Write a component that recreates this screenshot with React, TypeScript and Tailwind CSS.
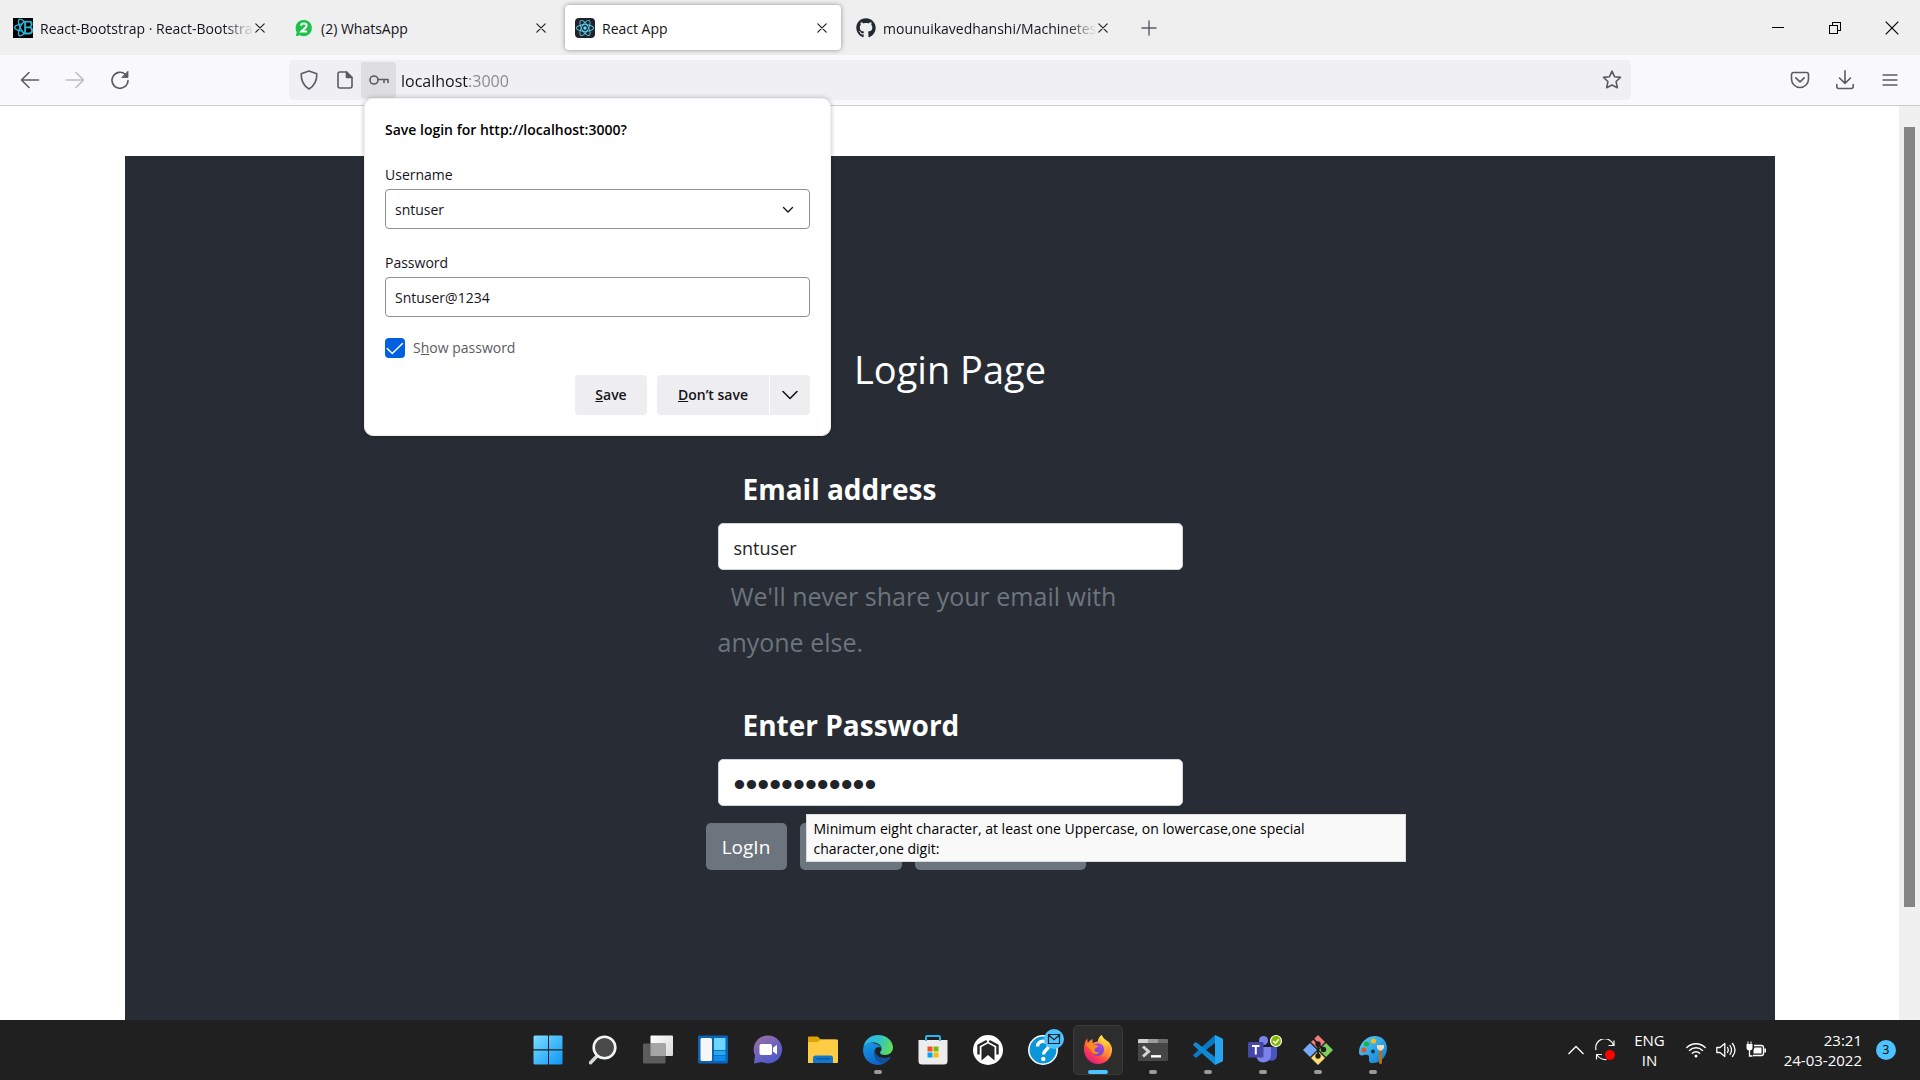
import type { ReactNode } from "react";
import { SiReact, SiReactbootstrap } from "react-icons/si";
import { FaGithub } from "react-icons/fa";

const ui = "font-['Open_Sans',sans-serif]";

/* ---------- Tab strip ---------- */

function CloseGlyph() {
  return (
    <svg width="10" height="10" viewBox="0 0 10 10" stroke="currentColor" strokeWidth="1.2" strokeLinecap="round">
      <path d="M.8.8l8.4 8.4M9.2.8L.8 9.2" />
    </svg>
  );
}

function WhatsAppIcon() {
  return (
    <svg width="20" height="20" viewBox="0 0 20 20">
      <path d="M1 19l1.3-4.6A8.6 8.6 0 1 1 5.800 17.700Z" fill="#1fc04c" stroke="#fff" strokeWidth=".8" />
      <path d="M7 7.600C7.200 4.800 12.600 4.800 12.600 7.800C12.600 10 9 11.300 7.200 13.600H13" fill="none" stroke="#fff" strokeWidth="2" />
    </svg>
  );
}

type TabProps = { icon: ReactNode; title: string; active?: boolean; fade?: boolean };

function Tab({ icon, title, active, fade }: TabProps) {
  return (
    <div
      className={
        active
          ? "flex h-[45px] w-[276px] items-center rounded bg-white pl-[10px] pr-[8px] shadow-[0_0_5px_rgba(0,0,0,0.4)]"
          : "flex h-[45px] w-[276px] items-center pl-[10px] pr-[8px]"
      }
    >
      <button type="button" aria-pressed={!!active} className="flex h-full min-w-0 flex-1 items-center gap-[7px] text-left">
        <span className="flex size-5 shrink-0 items-center justify-center">{icon}</span>
        <span
          className={
            fade
              ? "min-w-0 flex-1 overflow-hidden pt-0.5 text-[14px] leading-5 whitespace-nowrap [mask-image:linear-gradient(to_right,#000_86%,transparent)]"
              : "min-w-0 flex-1 overflow-hidden pt-0.5 text-[14px] leading-5 whitespace-nowrap"
          }
        >
          {title}
        </span>
      </button>
      <button type="button" aria-label={`Close ${title}`} className="flex h-6 w-[17px] shrink-0 items-center justify-end pr-[6px] text-[#222]">
        <CloseGlyph />
      </button>
    </div>
  );
}

function TabStrip() {
  return (
    <div className="flex h-[55px] items-center bg-[#efefef] pl-[3px] text-[#15141a]">
      <div className="flex gap-[5px]">
        <Tab
          fade
          title="React-Bootstrap · React-Bootstra"
          icon={
            <span className="flex size-5 items-center justify-center bg-black text-[#2fb5d6]">
              <SiReactbootstrap size={19} />
            </span>
          }
        />
        <Tab title="(2) WhatsApp" icon={<WhatsAppIcon />} />
        <Tab
          active
          title="React App"
          icon={
            <span className="flex size-5 items-center justify-center rounded-sm bg-[#20232a] text-[#61dafb]">
              <SiReact size={18} />
            </span>
          }
        />
        <Tab fade title="mounuikavedhanshi/Machinetes" icon={<FaGithub size={20} color="#24292f" />} />
      </div>
      <button type="button" aria-label="New tab" className="ml-[11px] flex size-8 items-center justify-center text-[#5b5b66]">
        <svg width="16" height="16" viewBox="0 0 16 16" stroke="currentColor" strokeWidth="1.4" strokeLinecap="round">
          <path d="M8 1v14M1 8h14" />
        </svg>
      </button>
      <div className="ml-auto flex h-full text-black">
        <button type="button" aria-label="Minimize" className="flex w-[57px] items-center justify-center">
          <svg width="12" height="12" viewBox="0 0 12 12" stroke="currentColor" shapeRendering="crispEdges">
            <path d="M0 5.500h12" />
          </svg>
        </button>
        <button type="button" aria-label="Restore" className="flex w-[57px] items-center justify-center">
          <svg width="12" height="12" viewBox="0 0 12 12" fill="none" stroke="currentColor" shapeRendering="crispEdges">
            <path d="M.5 3.500h8v8h-8ZM3.500 3.500v-3h8v8h-3" />
          </svg>
        </button>
        <button type="button" aria-label="Close" className="flex w-[57px] items-center justify-center">
          <svg width="14" height="14" viewBox="0 0 14 14" stroke="currentColor" strokeWidth="1.200">
            <path d="M.7.7l12.600 12.600M13.300.7L.7 13.300" />
          </svg>
        </button>
      </div>
    </div>
  );
}

/* ---------- Toolbar ---------- */

function Stroke({ children, size = 20 }: { children: ReactNode; size?: number }) {
  return (
    <svg width={size} height={size} viewBox="0 0 20 20" fill="none" stroke="currentColor" strokeWidth="1.600" strokeLinecap="round" strokeLinejoin="round">
      {children}
    </svg>
  );
}

function SaveLogin() {
  return (
    <section
      aria-label="Save login"
      className="absolute top-[38px] left-[75px] z-20 w-[467px] rounded-[9px] border border-[#f0f0f4] bg-white px-5 pt-[21px] pb-5 text-[14px] leading-5 text-[#15141a] shadow-[0_0_5px_rgba(0,0,0,0.25)]"
    >
      <h2 className="font-semibold text-black">Save login for http://localhost:3000?</h2>
      <label htmlFor="saved-user" className="mt-[25px] block">
        Username
      </label>
      <div className="relative mt-1">
        <select id="saved-user" className="block h-10 w-full appearance-none rounded border border-[#8f8f9d] bg-white px-[9px] pt-px">
          <option>sntuser</option>
        </select>
        <svg className="pointer-events-none absolute top-[17px] right-[16px]" width="12" height="8" viewBox="0 0 12 8" fill="none" stroke="#15141a" strokeWidth="1.400" strokeLinecap="round" strokeLinejoin="round">
          <path d="M1.500 1.500L6 6l4.500-4.500" />
        </svg>
      </div>
      <label htmlFor="saved-pass" className="mt-6 block">
        Password
      </label>
      <input id="saved-pass" type="text" defaultValue="Sntuser@1234" className="mt-1 block h-10 w-full rounded border border-[#8f8f9d] bg-white px-[9px] pt-px" />
      <div className="mt-[21px] flex items-center gap-2">
        <span className="relative size-5">
          <input id="show-pass" type="checkbox" defaultChecked className="block size-5 appearance-none rounded-sm bg-[#0060df]" />
          <svg className="pointer-events-none absolute inset-0" width="20" height="20" viewBox="0 0 20 20" fill="none" stroke="#fff" strokeWidth="1.500" strokeLinecap="round" strokeLinejoin="round">
            <path d="M2.200 10.500L7.300 15.500L17.500 5.500" />
          </svg>
        </span>
        <label htmlFor="show-pass" className="text-[#5b5b61]">
          S<u>h</u>ow password
        </label>
      </div>
      <div className="mt-[17px] flex justify-end font-semibold">
        <button type="button" className="h-10 w-[72px] rounded bg-[#eeeef0]">
          <u>S</u>ave
        </button>
        <button type="button" className="ml-[10px] h-10 w-[112px] rounded-l bg-[#eeeef0]">
          <u>D</u>on’t save
        </button>
        <button type="button" aria-label="More options" className="ml-px flex h-10 w-10 items-center justify-center rounded-r bg-[#eeeef0]">
          <svg width="16" height="10" viewBox="0 0 16 10" fill="none" stroke="#15141a" strokeWidth="1.600" strokeLinecap="round" strokeLinejoin="round">
            <path d="M1 1.500l7 7l7-7" />
          </svg>
        </button>
      </div>
    </section>
  );
}

function Toolbar() {
  return (
    <div className="flex h-[51px] items-center border-b border-[#cccccf] bg-[#f9f9fb] text-[#5b5b66]">
      <div className="flex w-[289px] gap-[5px] pl-[10px]">
        <button type="button" aria-label="Back" className="flex size-10 items-center justify-center">
          <Stroke>
            <path d="M18.500 10H1.500M9 2.500L1.500 10L9 17.500" />
          </Stroke>
        </button>
        <button type="button" aria-label="Forward" disabled className="flex size-10 items-center justify-center text-[#bdbdc2]">
          <Stroke>
            <path d="M1.500 10h17M11 2.500l7.500 7.500L11 17.500" />
          </Stroke>
        </button>
        <button type="button" aria-label="Reload" className="flex size-10 items-center justify-center">
          <Stroke>
            <path d="M18 10.500A8 8 0 1 1 15.500 4.500" />
            <path d="M18 1.500v6h-6Z" fill="currentColor" strokeWidth=".8" />
          </Stroke>
        </button>
      </div>
      <div className="relative flex h-10 flex-1 items-center rounded-[5px] bg-[#f0f0f4]">
        <button type="button" aria-label="Tracking protection" className="flex h-9 w-10 items-center justify-center">
          <Stroke>
            <path d="M10 1L2.200 3.800C2 10.500 4 15.500 10 19C16 15.500 18 10.500 17.800 3.800Z" />
          </Stroke>
        </button>
        <button type="button" aria-label="Site information" className="flex h-9 w-8 items-center justify-center">
          <Stroke>
            <path d="M11.500 2H5a2 2 0 0 0-2 2v12a2 2 0 0 0 2 2h10a2 2 0 0 0 2-2V7.500Z" />
            <path d="M11.500 2v5.500H17Z" fill="currentColor" />
          </Stroke>
        </button>
        <button type="button" aria-label="Saved logins" className="flex h-9 w-[35px] items-center justify-center rounded-[3px] bg-[#dedee0]">
          <Stroke>
            <circle cx="5" cy="10" r="4" />
            <path d="M9 9.500h10v3M15 9.500v3" />
          </Stroke>
        </button>
        <input
          type="text"
          aria-label="Address"
          defaultValue="localhost:3000"
          className="mr-4 ml-[5px] min-w-0 flex-1 bg-[linear-gradient(to_right,#15141a_68px,#85858d_68px)] bg-clip-text pt-0.5 text-[16px] leading-6 text-transparent outline-none"
        />
        <button type="button" aria-label="Bookmark this page" className="mr-[9px] flex size-5 items-center justify-center">
          <Stroke>
            <path d="M10 1.200l2.500 5.500l6 .7l-4.400 4.100l1.200 6.200L10 15l-5.300 2.700l1.200-6.200L1.500 7.400l6-.7Z" />
          </Stroke>
        </button>
        <SaveLogin />
      </div>
      <div className="flex w-[289px] justify-end gap-[5px] pr-[10px]">
        <button type="button" aria-label="Save to Pocket" className="flex size-10 items-center justify-center">
          <Stroke>
            <path d="M3.500 2.500h13a2 2 0 0 1 2 2V9A8.500 8.500 0 0 1 1.500 9V4.500a2 2 0 0 1 2-2ZM5.800 7.800L10 11.800l4.200-4" />
          </Stroke>
        </button>
        <button type="button" aria-label="Downloads" className="flex size-10 items-center justify-center">
          <Stroke>
            <path d="M10 .8v12.500M4.500 8L10 13.300L15.500 8M1.800 14.500v2a2 2 0 0 0 2 2h12.400a2 2 0 0 0 2-2v-2" />
          </Stroke>
        </button>
        <button type="button" aria-label="Menu" className="flex size-10 items-center justify-center">
          <Stroke>
            <path d="M3 5h14M3 10h14M3 15h14" strokeWidth="1.300" />
          </Stroke>
        </button>
      </div>
    </div>
  );
}

/* ---------- Web page ---------- */

function LoginPage() {
  return (
    <div className="flex flex-1 bg-white">
      <main className="mt-[50px] mr-[124px] ml-[125px] flex flex-1 flex-col items-center bg-[#282c34] text-white">
        <h1 className="mt-[186px] text-[38px] leading-[54px]">Login Page</h1>
        <form className="mt-[70px] flex w-[465px] flex-col">
          <label htmlFor="email" className="ml-[25px] text-[28px] leading-[46px] font-bold">
            Email address
          </label>
          <input id="email" type="text" defaultValue="sntuser" className="mt-[11px] h-[47px] rounded-[5px] border border-[#ced4da] bg-white px-[15px] pt-0.5 text-[18px] text-[#212529]" />
          <p className="mt-[3px] indent-[13px] text-[25px] leading-[46px] text-[#6c757d]">We'll never share your email with anyone else.</p>
          <label htmlFor="password" className="mt-[37px] ml-[25px] text-[28px] leading-[46px] font-bold">
            Enter Password
          </label>
          <input
            id="password"
            type="password"
            defaultValue="Sntuser@1234"
            aria-describedby="password-hint"
            className="mt-[11px] h-[47px] rounded-[5px] border border-[#ced4da] bg-white px-[15px] pt-1 font-['Liberation_Sans',sans-serif] text-[34px] text-[#212529]"
          />
          <div className="relative -ml-3 mt-[17px] flex gap-[13px]">
            <button type="button" className="h-[47px] w-[81px] rounded-[5px] bg-[#6c757d] pt-0.5 text-[19px]">
              LogIn
            </button>
            <button type="button" aria-label="Cancel" className="h-[47px] w-[102px] rounded-[5px] bg-[#6c757d]" />
            <button type="button" aria-label="Register" className="h-[47px] w-[171px] rounded-[5px] bg-[#6c757d]" />
            <div
              id="password-hint"
              role="tooltip"
              className="absolute -top-[9px] left-[100px] w-[600px] border border-[#dcdcdc] bg-[#f9f9f9] pt-1 pr-[80px] pb-0.5 pl-[7px] text-[14px] leading-5 text-black"
            >
              Minimum eight character, at least one Uppercase, on lowercase,one special character,one digit:
            </div>
          </div>
        </form>
      </main>
      <div aria-hidden="true" className="w-[21px] bg-[#f0f0f0] pt-[21px]">
        <div className="mx-[5px] h-[780px] bg-[#858585]" />
      </div>
    </div>
  );
}

/* ---------- Taskbar ---------- */

function Glyph({ children }: { children: ReactNode }) {
  return (
    <svg width="30" height="30" viewBox="0 0 30 30" overflow="visible">
      {children}
    </svg>
  );
}

const startIcon = (
  <Glyph>
    <defs>
      <linearGradient id="st" gradientUnits="userSpaceOnUse" x1="0" y1="0" x2="30" y2="30">
        <stop offset="0" stopColor="#7fe0ff" />
        <stop offset="1" stopColor="#0a94f8" />
      </linearGradient>
    </defs>
    <path fill="url(#st)" d="M1.500.5H15V14.300H.5V1.500ZM16 .5H28.500l1 1V14.300H16ZM.5 15.500H15V29.500H1.500l-1-1ZM16 15.500H29.500V28.500l-1 1H16Z" />
  </Glyph>
);

const searchIcon = (
  <Glyph>
    <path d="M9.500 20.500L2.500 27.800" stroke="#d5d8da" strokeWidth="3.400" strokeLinecap="round" />
    <circle cx="16.500" cy="12.500" r="10.800" fill="#4a4a4a" stroke="#f4f5f6" strokeWidth="2.600" />
  </Glyph>
);

const taskViewIcon = (
  <Glyph>
    <defs>
      <linearGradient id="tv" x1="0" y1="0" x2="1" y2="1">
        <stop offset="0" stopColor="#fff" />
        <stop offset="1" stopColor="#d8d8d8" />
      </linearGradient>
    </defs>
    <rect x="7.500" y=".5" width="22.500" height="20.500" rx="1" fill="url(#tv)" />
    <rect x="0" y="8.500" width="22.500" height="20" rx="1" fill="#5c5c5c" />
    <path d="M7.500 8.500h15V21h-15Z" fill="#a5a5a5" />
  </Glyph>
);

const widgetsIcon = (
  <Glyph>
    <rect x="0" y=".5" width="30" height="28" rx="1.500" fill="#0c63b3" />
    <rect x="2.500" y="3" width="11.500" height="23" rx="1.500" fill="#f4f6f8" />
    <path d="M16 3h11.500v12H16Z" fill="#6cd6ff" />
    <path d="M16 15.800h11.500v4.400H16Z" fill="#23a8f2" />
    <path d="M16 21h11.500v5H16Z" fill="#0f8bea" />
  </Glyph>
);

const chatIcon = (
  <Glyph>
    <defs>
      <linearGradient id="ch" x1="0" y1="0" x2=".6" y2="1">
        <stop offset="0" stopColor="#a06f9a" />
        <stop offset=".5" stopColor="#7465bd" />
        <stop offset="1" stopColor="#5059c9" />
      </linearGradient>
    </defs>
    <path d="M15 .5a14 14 0 1 1-6 26.600L1 28.500l1-8A14 14 0 0 1 15 .5Z" fill="url(#ch)" />
    <rect x="6.500" y="9" width="12.500" height="11" rx="1.800" fill="#fff" />
    <path d="M20 12.800L24 9.800V19.600L20 16.500Z" fill="#fff" />
  </Glyph>
);

const folderIcon = (
  <Glyph>
    <path d="M0 2.500Q0 1.500 1 1.500H9.500L13 4.500H28V20H0Z" fill="#dfa108" />
    <path d="M0 7H9.500L13 4.500H29Q30 4.500 30 5.500V27Q30 28 29 28H0Z" fill="#fdcc42" />
    <path d="M5 28V23a2.500 2.500 0 0 1 2.500-2.500h15A2.500 2.500 0 0 1 25 23v5Z" fill="#1278cc" />
    <path d="M8.500 23.800h13" stroke="#0b4f97" strokeWidth="1.200" />
  </Glyph>
);

const edgeIcon = (
  <Glyph>
    <defs>
      <linearGradient id="eg1" x1="0" y1=".3" x2="1" y2=".5">
        <stop offset="0" stopColor="#2fb2ee" />
        <stop offset=".5" stopColor="#2fc3c9" />
        <stop offset="1" stopColor="#63de55" />
      </linearGradient>
      <linearGradient id="eg2" x1="0" y1="0" x2=".5" y2="1">
        <stop offset="0" stopColor="#1a9be6" />
        <stop offset="1" stopColor="#0b66c9" />
      </linearGradient>
    </defs>
    <path d="M.2 13C1.500 4 8 0 15 0C24 0 30 6.200 30 12.500C30 17 26.500 20 22 20C18.500 20 17 18.800 17 17.700C17 16.500 18.500 16 18.500 13.500C18.500 9.500 13.500 6.800 9 7.500C4 8.200 1 10.500.2 13Z" fill="url(#eg1)" />
    <path d="M.1 14C1 9.500 5.500 7 10 8C14.500 8.800 17.500 10.300 18.300 13C17 11.500 13.500 11.500 12 14.500C9.500 20 15 28 21 28.500C18 30 14.500 30.200 11.500 29.600C4.500 28-.5 21.500.1 14Z" fill="url(#eg2)" />
    <path d="M12 14.500C9 20 13.500 28.200 21 28.500C24 27.200 26.500 24.700 27.700 22.300C28 21.600 27.500 21.300 26.900 21.700C20.500 25 11.500 21.500 12 14.500Z" fill="#12519b" />
  </Glyph>
);

const storeIcon = (
  <Glyph>
    <path d="M8 8V2Q8 1 9 1H21Q22 1 22 2V8" fill="none" stroke="#2cb5ee" strokeWidth="1.800" />
    <path d="M.5 5h29V26a3.500 3.500 0 0 1-3.500 3.500H4A3.500 3.500 0 0 1 .5 26Z" fill="#ededed" />
    <path d="M8 1.800V6M22 1.800V6" stroke="#2cb5ee" strokeWidth="1.800" />
    <path d="M9.500 11.500h5v5h-5Z" fill="#f25022" />
    <path d="M15.500 11.500h5v5h-5Z" fill="#7fba00" />
    <path d="M9.500 17.500h5v5h-5Z" fill="#00a4ef" />
    <path d="M15.500 17.500h5v5h-5Z" fill="#ffb900" />
  </Glyph>
);

const predatorIcon = (
  <Glyph>
    <circle cx="15" cy="15" r="15" fill="#fff" />
    <path d="M13.800 6L5.500 10.500V19.500M16.200 6L24.500 10.500V19.500" fill="none" stroke="#262626" strokeWidth="2.400" />
    <path d="M15 8.500L21.500 12V25.500L15 20L8.500 25.500V12Z" fill="#262626" />
  </Glyph>
);

const helpIcon = (
  <Glyph>
    <circle cx="15" cy="15" r="14.200" fill="#0a96d8" stroke="#fff" strokeWidth="1.500" />
    <path d="M9.500 11.500C9.500 4.500 20.500 4.500 20.500 11C20.500 15 15.500 14.800 15.500 19.500" fill="none" stroke="#fff" strokeWidth="3.400" />
    <circle cx="15.300" cy="24" r="2.200" fill="#fff" />
    <circle cx="26" cy="4" r="10" fill="#4cc2ff" />
    <path d="M20.500-.5h11v9h-11ZM20.500 0L26 4.800L31.500 0" fill="none" stroke="#10242f" strokeWidth="1.200" />
  </Glyph>
);

const firefoxIcon = (
  <Glyph>
    <defs>
      <linearGradient id="ff1" x1=".85" y1=".1" x2=".2" y2=".95">
        <stop offset="0" stopColor="#fff44f" />
        <stop offset=".35" stopColor="#ffa12e" />
        <stop offset=".65" stopColor="#ff4a45" />
        <stop offset="1" stopColor="#e31587" />
      </linearGradient>
      <linearGradient id="ff2" x1=".7" y1="0" x2=".3" y2="1">
        <stop offset="0" stopColor="#b444f0" />
        <stop offset="1" stopColor="#5c49c8" />
      </linearGradient>
      <linearGradient id="ff3" x1="0" y1="0" x2=".2" y2="1">
        <stop offset="0" stopColor="#ffe94a" />
        <stop offset=".55" stopColor="#ffc233" />
        <stop offset="1" stopColor="#ff7a3a" />
      </linearGradient>
    </defs>
    <path d="M27.700 10C27 8.400 25.700 6.800 24.500 6.200C22 4.500 19.200 2.500 18.800 0C16 1.500 15 4.500 14.800 6.500C13 6.600 11.500 7.200 10.300 8.200C9.300 7.200 9.200 5.500 9.600 4C7.500 5 6 6.400 5 7.500C4.300 6.600 4.300 4.300 4.400 3.500C2 5.500 1 9.500 1 14.500C1 22.500 7.200 29 15 29C22.500 29 29 22.800 29 15C29 13 28.500 11.300 27.700 10Z" fill="url(#ff1)" />
    <circle cx="14.800" cy="14.500" r="6.300" fill="url(#ff2)" />
    <path d="M3 9C6 8 9 8 11 9.500L15.500 11C14.500 13 12 12.500 11.500 14.500C11.500 17 14 18 16.500 16.800C15 20.500 9.500 20 8.300 15.500C6 13 4 12 3 9Z" fill="#ff8a1f" />
    <path d="M18.800 0C16.500 3 18 6.200 20.500 8.800C24 12.500 23 19.500 17.500 21.500C24 22 28 16.500 27.300 10.500C26 7 20.500 5.500 18.800 0Z" fill="url(#ff3)" />
  </Glyph>
);

const terminalIcon = (
  <Glyph>
    <rect x="0" y="4" width="30" height="22" rx="1.200" fill="#464646" />
    <path d="M0 8V5.200Q0 4 1.200 4H10V8Z" fill="#d0d0d0" />
    <path d="M10 4H20V8H10Z" fill="#9c9c9c" />
    <path d="M20 4h8.800Q30 4 30 5.200V8H20Z" fill="#6e6e6e" />
    <path d="M5 11.500L10.500 16.500L5 21.500" fill="none" stroke="#d5d5d5" strokeWidth="3" />
    <path d="M13 21.300h10" stroke="#fff" strokeWidth="2.400" />
  </Glyph>
);

const vscodeIcon = (
  <Glyph>
    <path d="M22 0L29 3.200Q30 3.700 30 4.800V25.200Q30 26.300 29 26.800L22 30Z" fill="#25a4f0" />
    <path d="M22 0V8L3.500 22.500Q2.800 23 2.100 22.500L.5 21Q-.3 20.200.5 19.500Z" fill="#0879c4" />
    <path d="M22 30V22L3.500 7.500Q2.800 7 2.100 7.500L.5 9Q-.3 9.800.5 10.500Z" fill="#1188d6" />
  </Glyph>
);

const teamsIcon = (
  <Glyph>
    <circle cx="15.500" cy="5.500" r="4.500" fill="#7b83eb" />
    <path d="M20 12h9v8.500a5.500 5.500 0 0 1-9 4Z" fill="#4b53bc" />
    <path d="M9 12H23V20.500a7.500 7.500 0 0 1-14.500 2Z" fill="#7b83eb" />
    <rect x="0" y="7" width="15.500" height="15.500" rx="1.200" fill="#4449a8" />
    <path d="M4 11h7.500M7.800 11v8.500" stroke="#fff" strokeWidth="2" />
    <circle cx="28" cy="6" r="5.500" fill="#7fba00" stroke="#fff" strokeWidth="1.200" />
    <path d="M25.300 6l2 2.200l3.500-4" fill="none" stroke="#fff" strokeWidth="1.400" />
  </Glyph>
);

const gitIcon = (
  <Glyph>
    <path d="M15 0L22 7L15 14L8 7Z" fill="#f47b7b" />
    <path d="M23 8L30 15L23 22L16 15Z" fill="#7ccf5c" />
    <path d="M7 8L14 15L7 22L0 15Z" fill="#76a9fa" />
    <path d="M15 16L22 23L15 30L8 23Z" fill="#fbdc74" />
    <g stroke="#1d1d1d" strokeWidth="1.800" fill="#1d1d1d">
      <path d="M10 3.500L15 9V21M15 9.500L21 15" fill="none" />
      <circle cx="15" cy="9" r="1.800" />
      <circle cx="15" cy="21" r="1.800" />
      <circle cx="20.500" cy="14.500" r="1.800" />
    </g>
  </Glyph>
);

const paintIcon = (
  <Glyph>
    <defs>
      <linearGradient id="pt" x1="0" y1="0" x2="1" y2="1">
        <stop offset="0" stopColor="#55d3fa" />
        <stop offset="1" stopColor="#0c79d0" />
      </linearGradient>
    </defs>
    <path d="M16 1C8 1.500 1 9 1 17C1 21 3.500 21 6 20C9 19 12 20 11 24C10.500 27.500 13 28.500 16 28C24 27 29 20.500 29 13C29 5.500 23.500.8 16 1Z" fill="url(#pt)" />
    <circle cx="5.800" cy="15" r="2.500" fill="#e0532f" />
    <circle cx="8.500" cy="9" r="2.600" fill="#27ab3e" />
    <circle cx="15.500" cy="6" r="2.600" fill="#f5b921" />
    <circle cx="15" cy="16.500" r="2" fill="#10345c" />
    <path d="M21 15.500h3V27.500a1.500 1.500 0 0 1-3 0Z" fill="#b86d16" />
    <path d="M19 10H26V13L24 15.500H21L19 13Z" fill="#f2dcc0" />
  </Glyph>
);

const apps: { name: string; icon: ReactNode; state?: "running" | "active" }[] = [
  { name: "Start", icon: startIcon },
  { name: "Search", icon: searchIcon },
  { name: "Task view", icon: taskViewIcon },
  { name: "Widgets", icon: widgetsIcon },
  { name: "Chat", icon: chatIcon },
  { name: "File Explorer", icon: folderIcon },
  { name: "Edge", icon: edgeIcon, state: "running" },
  { name: "Store", icon: storeIcon },
  { name: "Gaming hub", icon: predatorIcon },
  { name: "Help", icon: helpIcon },
  { name: "Firefox", icon: firefoxIcon, state: "active" },
  { name: "Terminal", icon: terminalIcon, state: "running" },
  { name: "Code editor", icon: vscodeIcon, state: "running" },
  { name: "Teams", icon: teamsIcon, state: "running" },
  { name: "Git", icon: gitIcon, state: "running" },
  { name: "Paint", icon: paintIcon, state: "running" },
];

function Taskbar() {
  return (
    <footer className="grid h-[60px] grid-cols-[1fr_auto_1fr] items-center bg-[#202020] text-white">
      <div />
      <nav aria-label="Taskbar" className="flex gap-[5px] pl-px">
        {apps.map((app) => (
          <button
            key={app.name}
            type="button"
            aria-label={app.name}
            className={
              app.state === "active"
                ? "relative flex size-[50px] items-center justify-center rounded-[5px] border border-[#3a3a3a] bg-[#2d2d2d]"
                : "relative flex size-[50px] items-center justify-center"
            }
          >
            {app.icon}
            {app.state === "running" && <span className="absolute bottom-px left-[21px] h-1 w-2 rounded-full bg-[#9a9a9a]" />}
            {app.state === "active" && <span className="absolute bottom-0 left-[14px] h-1 w-5 rounded-full bg-[#4cc2ff]" />}
          </button>
        ))}
      </nav>
      <div className="flex items-center justify-end pr-6">
        <button type="button" aria-label="Show hidden icons" className="mr-[8px]">
          <svg width="20" height="20" viewBox="0 0 20 20" fill="none" stroke="#fff" strokeWidth="1.300">
            <path d="M2.500 14L10 6.500L17.500 14" />
          </svg>
        </button>
        <button type="button" aria-label="Update" className="mr-[18px]">
          <svg width="22" height="22" viewBox="0 0 22 22" fill="none" stroke="#fff" strokeWidth="1.200">
            <path d="M2 11A9 9 0 0 1 19.500 6.500M20 1.500V6.500H14.500M2.500 20.500V15.500H8M3 16Q6.500 21 12.500 20.500" />
            <circle cx="16" cy="16" r="5" fill="#f00" stroke="none" />
          </svg>
        </button>
        <button type="button" className="mr-[21px] text-center text-[15px] leading-5">
          ENG
          <br />
          IN
        </button>
        <button type="button" aria-label="Network, volume and battery" className="mr-[18px] flex gap-[10px]">
          <svg width="20" height="20" viewBox="0 0 20 20" fill="none" stroke="#fff" strokeWidth="1.400" strokeLinecap="round">
            <path d="M.8 7.500a13 13 0 0 1 18.400 0M3.500 10.500a9.200 9.200 0 0 1 13 0M6.300 13.300a5.300 5.300 0 0 1 7.400 0" />
            <circle cx="10" cy="16" r="1.500" fill="#fff" stroke="none" />
          </svg>
          <svg width="20" height="20" viewBox="0 0 20 20" fill="none" stroke="#fff" strokeWidth="1.300" strokeLinecap="round" strokeLinejoin="round">
            <path d="M.8 7.500H4L8.800 3.500V16.500L4 12.500H.8ZM11.500 7.500Q13 10 11.500 12.500M14 5.500Q17 10 14 14.500M16.500 3.500Q21.500 10 16.500 16.500" />
          </svg>
          <svg width="20" height="20" viewBox="0 0 20 20" fill="none" stroke="#fff" strokeWidth="1.300">
            <path d="M8 5.500h7.500a2 2 0 0 1 2 2v6a2 2 0 0 1-2 2h-8.500" />
            <path d="M8.500 7.500h7v6h-8V10Z" fill="#fff" stroke="none" />
            <path d="M18.300 8.500h1.700v4h-1.700ZM.5 4h6v3.500a3 3 0 0 1-6 0ZM1.500 1.500h1v3h-1ZM4.500 1.500h1v3h-1Z" fill="#fff" stroke="none" />
            <path d="M3.500 10v6h3" />
          </svg>
        </button>
        <button type="button" className="mr-[14px] text-right text-[15px] leading-5">
          23:21
          <br />
          24-03-2022
        </button>
        <span className="flex size-5 items-center justify-center rounded-full bg-[#4cc2ff] text-[12px] leading-5 text-black">3</span>
      </div>
    </footer>
  );
}

export default function App() {
  return (
    <div className={`flex min-h-screen flex-col overflow-hidden ${ui}`}>
      <TabStrip />
      <Toolbar />
      <LoginPage />
      <Taskbar />
    </div>
  );
}
